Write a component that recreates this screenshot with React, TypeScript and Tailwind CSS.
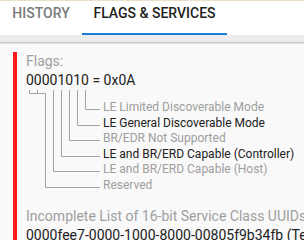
const FLAG_ROWS = [
  { label: "LE Limited Discoverable Mode", on: false },
  { label: "LE General Discoverable Mode", on: true },
  { label: "BR/EDR Not Supported", on: false },
  { label: "LE and BR/ERD Capable (Controller)", on: true },
  { label: "LE and BR/ERD Capable (Host)", on: false },
  { label: "Reserved", on: false },
]

// bit lines, x in svg coords (digits start at x=26 on page)
const BIT_X = [59.5, 51.5, 43.5, 35.5, 27.5, 19.5]

const FlagTree = () => (
  <svg width="77" height="104" className="shrink-0" stroke="#a3a3a3" strokeWidth="1" fill="none">
    {/* reserved bracket over bits 7..5 */}
    <path d="M3.5 0 V3.5 H19.5 M11.5 0 V3.5" />
    {BIT_X.map((x, i) => {
      const y = Math.round(19 + i * 15.6) + 0.5
      const top = i === 5 ? 3.5 : 0
      return <path key={i} d={`M${x} ${top} V${y} H74`} />
    })}
  </svg>
)

export default function App() {
  return (
    <div className="w-[304px] h-[240px] overflow-hidden bg-[#f9f9f9] font-['Roboto',sans-serif]">
      <div className="h-px bg-[#eadfc9]" />

      {/* tabs */}
      <div className="flex bg-white">
        <div className="w-[82px] h-[34px] pt-[2px] border-b-2 border-transparent text-center text-[14px] leading-5 font-medium text-[#7a7a7a]">
          HISTORY
        </div>
        <div className="w-[145px] h-[34px] pt-[2px] border-b-2 border-[#1a7fd4] text-center text-[14px] leading-5 font-medium text-[#212121]">
          FLAGS &amp; SERVICES
        </div>
      </div>
      <div className="h-[7px] bg-[#ececec]" />
      <div className="h-px bg-[#c6c6c6]" />
      <div className="h-px bg-[#e2e2e2]" />

      {/* card */}
      <div className="flex pl-[13px] pt-2">
        <div className="w-[4px] shrink-0 bg-[#ff1a1a]" />
        <div className="pl-[9px] whitespace-nowrap">
          <div className="text-[14px] leading-[19px] text-[#9e9e9e]">Flags:</div>
          <div className="text-[14px] leading-[19px] text-[#212121]">00001010 = 0x0A</div>

          <div className="flex">
            <FlagTree />
            <div className="flex flex-col pt-[10px] text-[12px] leading-[15.6px]">
              {FLAG_ROWS.map((r) => (
                <span key={r.label} className={r.on ? "text-[#212121]" : "text-[#9e9e9e]"}>
                  {r.label}
                </span>
              ))}
            </div>
          </div>

          <div className="mt-[13px] text-[14px] leading-[19px] text-[#9e9e9e]">
            Incomplete List of 16-bit Service Class UUIDs
          </div>
          <div className="text-[14px] leading-[19px] text-[#212121]">
            0000fee7-0000-1000-8000-00805f9b34fb (Tencent Holdings Limited)
          </div>
        </div>
      </div>
    </div>
  )
}
